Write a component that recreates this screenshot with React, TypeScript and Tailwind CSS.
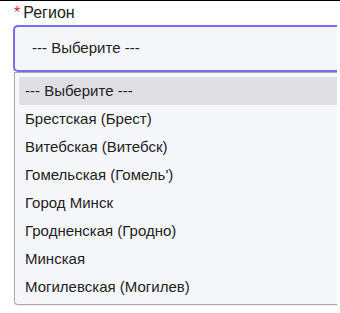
import React from "react";

const items = [
  "Брестская (Брест)",
  "Витебская (Витебск)",
  "Гомельская (Гомель')",
  "Город Минск",
  "Гродненская (Гродно)",
  "Минская",
  "Могилевская (Могилев)",
];

export default function App() {
  return (
    <div
      className="w-[340px] h-[313px] bg-white border-t border-black overflow-hidden"
      style={{ fontFamily: '"Liberation Sans", Arial, sans-serif' }}
    >
      <div className="pl-[14px] pt-[3px] h-[24px] flex items-start text-[16px] leading-[18px] text-[#222]">
        <span className="text-[#e0321e] mr-[3px]">*</span>
        <span>Регион</span>
      </div>
      <div className="ml-[13px] w-[324px] h-[47px] border-2 border-[#7a6ee8] border-r-0 rounded-l-[5px] bg-[#f5f6fa] flex items-center pl-[17px] text-[15px] text-[#222]">
        --- Выберите ---
      </div>
      <div className="ml-[14px] w-[323px] h-[233px] border border-[#a9a9a9] border-r-0 rounded-bl-[4px] bg-[#f6f7fb] pt-[4px] pl-[4px] shadow-[0_1px_1px_rgba(0,0,0,0.08)]">
        <div className="h-[28px] bg-[#e0dfe4] flex items-center pl-[6px] text-[15px] text-[#222] rounded-l-[2px]">
          --- Выберите ---
        </div>
        {items.map((t) => (
          <div key={t} className="h-[28px] flex items-center pl-[6px] text-[15px] text-[#222]">
            {t}
          </div>
        ))}
      </div>
    </div>
  );
}
